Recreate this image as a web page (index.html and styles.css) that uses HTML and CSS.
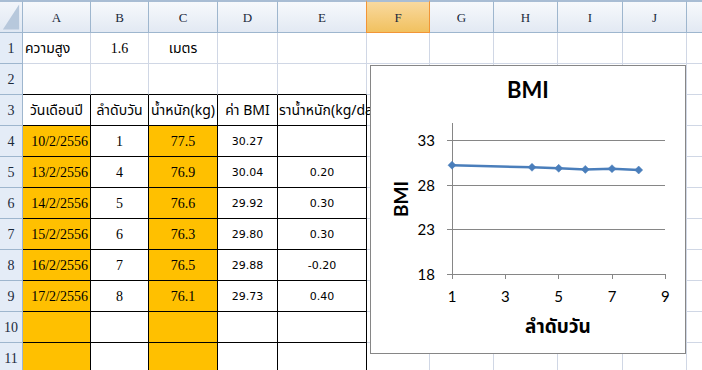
FILE: index.html
```html
<!DOCTYPE html>
<html lang="th">
<head>
<meta charset="utf-8">
<title>BMI</title>
<link rel="stylesheet" href="styles.css">
</head>
<body>
<div class="sheet">
  <!-- column headers -->
  <div class="corner"><svg width="23" height="33" viewBox="0 0 23 33"><polygon points="3,30 20,4 20,30" fill="#b7c8dc"/></svg></div>
  <div class="colhead">A</div>
  <div class="colhead">B</div>
  <div class="colhead">C</div>
  <div class="colhead">D</div>
  <div class="colhead">E</div>
  <div class="colhead sel">F</div>
  <div class="colhead">G</div>
  <div class="colhead">H</div>
  <div class="colhead">I</div>
  <div class="colhead">J</div>
  <div class="colhead"></div>

  <!-- row 1 -->
  <div class="rowhead">1</div>
  <div class="cell th left">ความสูง</div>
  <div class="cell num">1.6</div>
  <div class="cell th">เมตร</div>
  <div class="cell"></div><div class="cell"></div><div class="cell"></div><div class="cell"></div><div class="cell"></div><div class="cell"></div><div class="cell"></div><div class="cell"></div>

  <!-- row 2 -->
  <div class="rowhead">2</div>
  <div class="cell tb"></div><div class="cell tb"></div><div class="cell tb"></div><div class="cell tb"></div><div class="cell tb"></div>
  <div class="cell"></div><div class="cell"></div><div class="cell"></div><div class="cell"></div><div class="cell"></div><div class="cell"></div>

  <!-- row 3 -->
  <div class="rowhead">3</div>
  <div class="cell box th">วันเดือนปี</div>
  <div class="cell box th">ลำดับวัน</div>
  <div class="cell box th">น้ำหนัก(kg)</div>
  <div class="cell box th">ค่า BMI</div>
  <div class="cell box th over">ราน้ำหนัก(kg/day)</div>
  <div class="cell"></div><div class="cell"></div><div class="cell"></div><div class="cell"></div><div class="cell"></div><div class="cell"></div>

  <!-- row 4 -->
  <div class="rowhead">4</div>
  <div class="cell box fill num right">10/2/2556</div>
  <div class="cell box num">1</div>
  <div class="cell box fill num">77.5</div>
  <div class="cell box sans">30.27</div>
  <div class="cell box sans"></div>
  <div class="cell"></div><div class="cell"></div><div class="cell"></div><div class="cell"></div><div class="cell"></div><div class="cell"></div>

  <!-- row 5 -->
  <div class="rowhead">5</div>
  <div class="cell box fill num right">13/2/2556</div>
  <div class="cell box num">4</div>
  <div class="cell box fill num">76.9</div>
  <div class="cell box sans">30.04</div>
  <div class="cell box sans">0.20</div>
  <div class="cell"></div><div class="cell"></div><div class="cell"></div><div class="cell"></div><div class="cell"></div><div class="cell"></div>

  <!-- row 6 -->
  <div class="rowhead">6</div>
  <div class="cell box fill num right">14/2/2556</div>
  <div class="cell box num">5</div>
  <div class="cell box fill num">76.6</div>
  <div class="cell box sans">29.92</div>
  <div class="cell box sans">0.30</div>
  <div class="cell"></div><div class="cell"></div><div class="cell"></div><div class="cell"></div><div class="cell"></div><div class="cell"></div>

  <!-- row 7 -->
  <div class="rowhead">7</div>
  <div class="cell box fill num right">15/2/2556</div>
  <div class="cell box num">6</div>
  <div class="cell box fill num">76.3</div>
  <div class="cell box sans">29.80</div>
  <div class="cell box sans">0.30</div>
  <div class="cell"></div><div class="cell"></div><div class="cell"></div><div class="cell"></div><div class="cell"></div><div class="cell"></div>

  <!-- row 8 -->
  <div class="rowhead">8</div>
  <div class="cell box fill num right">16/2/2556</div>
  <div class="cell box num">7</div>
  <div class="cell box fill num">76.5</div>
  <div class="cell box sans">29.88</div>
  <div class="cell box sans">-0.20</div>
  <div class="cell"></div><div class="cell"></div><div class="cell"></div><div class="cell"></div><div class="cell"></div><div class="cell"></div>

  <!-- row 9 -->
  <div class="rowhead">9</div>
  <div class="cell box fill num right">17/2/2556</div>
  <div class="cell box num">8</div>
  <div class="cell box fill num">76.1</div>
  <div class="cell box sans">29.73</div>
  <div class="cell box sans">0.40</div>
  <div class="cell"></div><div class="cell"></div><div class="cell"></div><div class="cell"></div><div class="cell"></div><div class="cell"></div>

  <!-- row 10 -->
  <div class="rowhead">10</div>
  <div class="cell box fill"></div>
  <div class="cell box"></div>
  <div class="cell box fill"></div>
  <div class="cell box"></div>
  <div class="cell box"></div>
  <div class="cell"></div><div class="cell"></div><div class="cell"></div><div class="cell"></div><div class="cell"></div><div class="cell"></div>

  <!-- row 11 -->
  <div class="rowhead">11</div>
  <div class="cell box fill"></div>
  <div class="cell box"></div>
  <div class="cell box fill"></div>
  <div class="cell box"></div>
  <div class="cell box"></div>
  <div class="cell"></div><div class="cell"></div><div class="cell"></div><div class="cell"></div><div class="cell"></div><div class="cell"></div>
</div>

<!-- embedded line chart -->
<div class="chart">
  <svg class="plot" width="316" height="289" viewBox="0 0 316 289">
    <text class="title" x="158" y="33" text-anchor="middle">BMI</text>

    <g class="grid">
      <line x1="77" y1="75.9" x2="295.4" y2="75.9"/>
      <line x1="77" y1="120.4" x2="295.4" y2="120.4"/>
      <line x1="77" y1="164.9" x2="295.4" y2="164.9"/>
      <line x1="77" y1="209.3" x2="295.4" y2="209.3"/>
      <line x1="82" y1="58" x2="82" y2="214"/>
      <line x1="135.3" y1="209.3" x2="135.3" y2="214"/>
      <line x1="188.7" y1="209.3" x2="188.7" y2="214"/>
      <line x1="242" y1="209.3" x2="242" y2="214"/>
      <line x1="295.4" y1="209.3" x2="295.4" y2="214"/>
    </g>

    <g class="ticks" text-anchor="end">
      <text x="65" y="81">33</text>
      <text x="65" y="125.5">28</text>
      <text x="65" y="170">23</text>
      <text x="65" y="214.5">18</text>
    </g>
    <g class="ticks" text-anchor="middle">
      <text x="82" y="236.5">1</text>
      <text x="135.3" y="236.5">3</text>
      <text x="188.7" y="236.5">5</text>
      <text x="242" y="236.5">7</text>
      <text x="295.4" y="236.5">9</text>
    </g>

    <text class="axis-title" transform="translate(38 134) rotate(-90)" text-anchor="middle">BMI</text>
    <text class="axis-title thai" x="188" y="268" text-anchor="middle">ลำดับวัน</text>

    <polyline class="series" points="82,100.2 162,102.3 188.7,103.3 215.3,104.4 242,103.7 268.7,105"/>
    <g class="marker">
      <polygon points="82,96.2 86,100.2 82,104.2 78,100.2"/>
      <polygon points="162,98.3 166,102.3 162,106.3 158,102.3"/>
      <polygon points="188.7,99.3 192.7,103.3 188.7,107.3 184.7,103.3"/>
      <polygon points="215.3,100.4 219.3,104.4 215.3,108.4 211.3,104.4"/>
      <polygon points="242,99.7 246,103.7 242,107.7 238,103.7"/>
      <polygon points="268.7,101 272.7,105 268.7,109 264.7,105"/>
    </g>
  </svg>
</div>
</body>
</html>
```
FILE: styles.css
```css
html, body {
  margin: 0;
  padding: 0;
  background: #ffffff;
}

body {
  width: 702px;
  height: 370px;
  overflow: hidden;
  position: relative;
  font-family: "Liberation Serif", "Noto Serif Thai", "Noto Sans Thai", "Tlwg Typo", "Loma", serif;
  color: #000;
}

/* worksheet grid */
.sheet {
  display: grid;
  grid-template-columns: 23px 68px 58px 69px 60px 89px 63px 64px 64px 65px 64px 16px;
  grid-template-rows: 33px repeat(11, 31px);
}

.sheet > div {
  box-sizing: border-box;
  display: flex;
  align-items: center;
  justify-content: center;
  white-space: nowrap;
  min-width: 0;
}

.corner {
  background: linear-gradient(#f2f5fa, #e0e8f3);
  border-top: 2px solid #a9bdd4;
  border-right: 1px solid #9eb6ce;
  border-bottom: 1px solid #9eb6ce;
}
.corner svg {
  position: relative;
  top: -1px;
}

.colhead {
  background: linear-gradient(#f7f9fc, #e2e9f3);
  border-top: 2px solid #a9bdd4;
  border-right: 1px solid #9eb6ce;
  border-bottom: 1px solid #9eb6ce;
  font-family: "Liberation Serif", serif;
  font-size: 13px;
  color: #1b2a3c;
  padding-top: 2px;
}
.colhead.sel {
  background: linear-gradient(#f9d99f, #f1c15f);
  border-right-color: #f29536;
  border-left: 1px solid #f29536;
  border-bottom-color: #f29536;
  margin-left: -1px;
}

.rowhead {
  background: #e4ecf7;
  border-right: 1px solid #9eb6ce;
  border-bottom: 1px solid #9eb6ce;
  font-family: "Liberation Serif", serif;
  font-size: 14px;
  color: #1b2a3c;
  padding-top: 1px;
}

.cell {
  border-right: 1px solid #d0d7e5;
  border-bottom: 1px solid #d0d7e5;
  font-size: 14px;
  overflow: hidden;
}
.cell.left { justify-content: flex-start; padding-left: 2px; }
.cell.right { justify-content: flex-end; padding-right: 2px; }

.cell.th {
  font-family: "Noto Sans Thai", "Noto Serif Thai", "Tlwg Typo", "Loma", "Liberation Serif", serif;
  font-size: 14px;
}
.cell.num {
  font-family: "Liberation Serif", serif;
  font-size: 14px;
  padding-top: 1px;
}
.cell.sans {
  font-family: "DejaVu Sans", sans-serif;
  font-size: 11px;
  padding-top: 1px;
}

/* bordered data block A3:E11 */
.cell.tb { border-bottom-color: #000; }
.cell.box {
  border-right-color: #000;
  border-bottom-color: #000;
}
.cell.fill { background: #ffc000; }
.cell.over {
  overflow: visible;
  justify-content: flex-start;
  padding-left: 1px;
}

/* chart object floating over the sheet */
.chart {
  position: absolute;
  left: 370px;
  top: 65px;
  width: 316px;
  height: 289px;
  box-sizing: border-box;
  border: 1px solid #868686;
  background: #ffffff;
}
.chart .plot {
  position: absolute;
  left: -1px;
  top: -1px;
  display: block;
}

.plot text {
  font-family: "Lato", "Noto Sans Thai", "Loma", sans-serif;
  fill: #000;
}
.plot .title {
  font-size: 22px;
  font-weight: 700;
}
.plot .ticks text {
  font-size: 15px;
}
.plot .axis-title {
  font-size: 19px;
  font-weight: 700;
}
.plot .axis-title.thai {
  font-family: "Noto Sans Thai", "Loma", "Lato", sans-serif;
  font-size: 19px;
}
.plot .grid line {
  stroke: #868686;
  stroke-width: 1;
  shape-rendering: crispEdges;
}
.plot .series {
  fill: none;
  stroke: #4a7ebb;
  stroke-width: 2.5;
  stroke-linejoin: round;
}
.plot .marker polygon {
  fill: #4a7ebb;
  stroke: #4a7ebb;
  stroke-width: 0.5;
}
```
